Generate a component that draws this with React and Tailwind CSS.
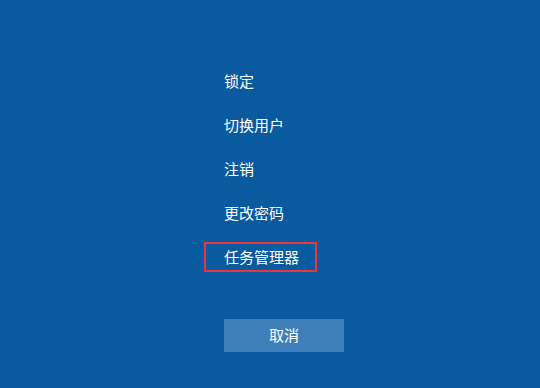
export default function App() {
  const items = ['锁定', '切换用户', '注销', '更改密码'];
  return (
    <div
      className="w-[540px] h-[388px] bg-[#0a5a9f] text-white overflow-hidden"
      style={{ fontFamily: '"Noto Sans CJK SC", "Microsoft YaHei", sans-serif' }}
    >
      <div className="pl-[224px] pt-[70px] flex flex-col">
        {items.map((t) => (
          <div key={t} className="h-[44px] text-[15px] leading-[22px]">{t}</div>
        ))}
        <div className="-ml-[20px] w-[113px] h-[30px] border-2 border-[#e8373f] flex items-center pl-[18px] text-[15px] -mt-[4px]">
          任务管理器
        </div>
        <button className="mt-[47px] w-[120px] h-[33px] bg-[#3f7fb9] text-[15px] text-white flex items-center justify-center">
          取消
        </button>
      </div>
    </div>
  );
}
